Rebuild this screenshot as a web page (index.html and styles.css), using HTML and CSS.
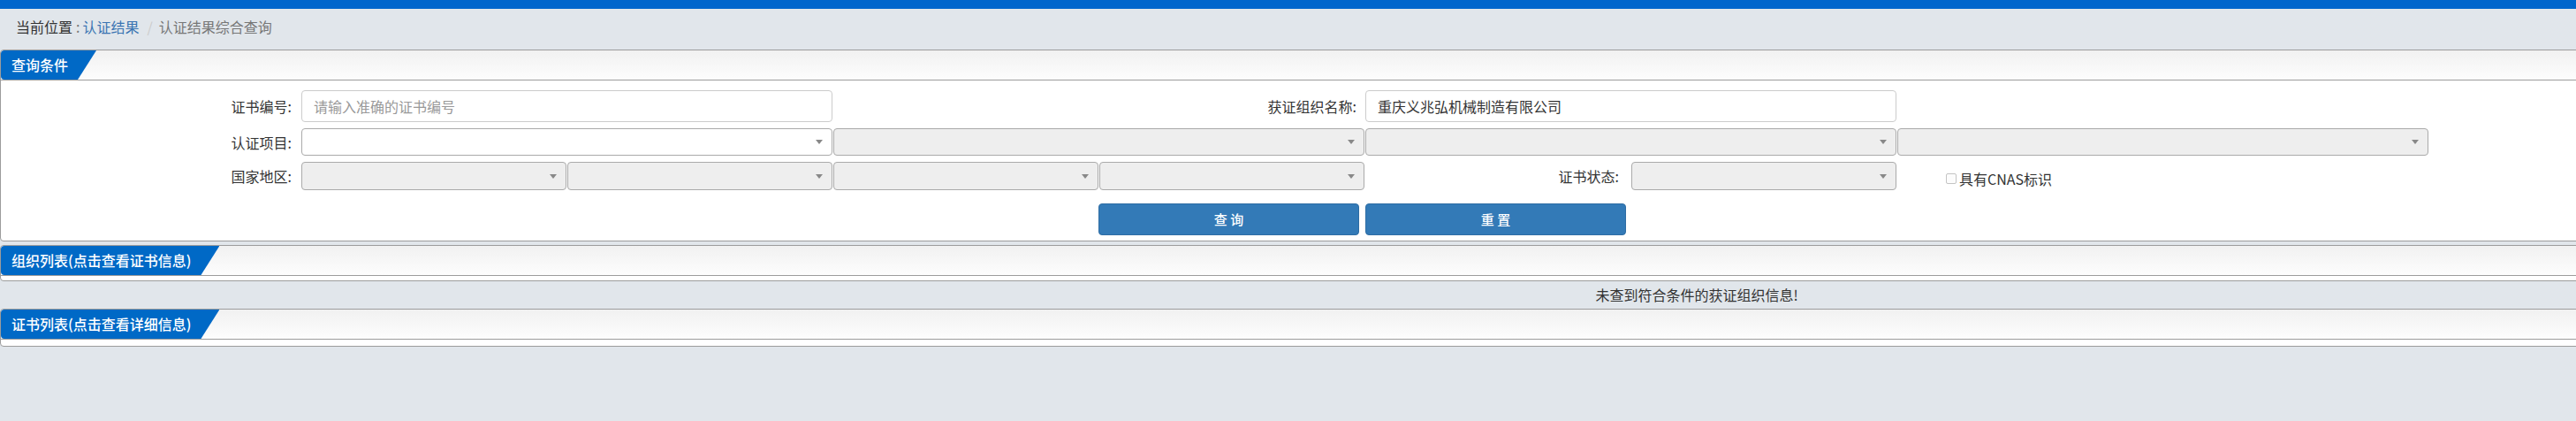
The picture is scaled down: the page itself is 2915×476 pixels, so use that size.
FILE: index.html
```html
<!doctype html>
<html>
  <head>
    <meta charset="utf-8">
    <title>认证结果综合查询</title>
    <link rel="stylesheet" href="styles.css">
  </head>
  <body>
    <div class="topbar"></div>
    <div class="crumbs">
      <span class="crumb-here">当前位置</span><span class="crumb-colon">:</span><a class="crumb-link">认证结果</a><span class="crumb-sep">/</span><span class="crumb-current">认证结果综合查询</span>
    </div>
    <div class="page">
      <div class="panel">
        <div class="panel-head"><span class="tab">查询条件</span></div>
        <div class="query-form">
          <!-- row 1 -->
          <label class="lbl r1">证书编号:</label>
          <input class="text-field r1 c2-4" type="text" placeholder="请输入准确的证书编号">
          <label class="lbl r1 c4-6">获证组织名称:</label>
          <input class="text-field r1 c6-8" type="text" value="重庆义兆弘机械制造有限公司">

          <!-- row 2 -->
          <label class="lbl r2">认证项目:</label>
          <div class="select r2 c2-4 enabled"></div>
          <div class="select r2 c4-6"></div>
          <div class="select r2 c6-8"></div>
          <div class="select r2 c8-10"></div>

          <!-- row 3 -->
          <label class="lbl r3">国家地区:</label>
          <div class="select r3 c2-3"></div>
          <div class="select r3 c3-4"></div>
          <div class="select r3 c4-5"></div>
          <div class="select r3 c5-6"></div>
          <label class="lbl lbl-status r3 c6-7">证书状态:</label>
          <div class="select r3 c7-8"></div>
          <div class="cnas r3 c8-9"><span class="checkbox"></span>具有CNAS标识</div>

          <!-- buttons -->
          <div class="btn r4 c5-6">查 询</div>
          <div class="btn r4 c6-7">重 置</div>
        </div>
      </div>

      <div class="panel panel-org">
        <div class="panel-head"><span class="tab">组织列表(点击查看证书信息)</span></div>
        <div class="panel-body"></div>
      </div>

      <div class="empty-msg">未查到符合条件的获证组织信息!</div>

      <div class="panel panel-cert">
        <div class="panel-head"><span class="tab">证书列表(点击查看详细信息)</span></div>
        <div class="panel-body"></div>
      </div>
    </div>
  </body>
</html>
```

FILE: styles.css
```css
html, body {
  margin: 0;
  padding: 0;
  overflow: hidden;
}
body {
  background-color: #e1e6eb;
  font-family: "Noto Sans CJK SC", "Noto Sans", sans-serif;
  font-size: 16px;
  color: #333;
}
.topbar {
  height: 10px;
  background-color: #0066cc;
}

/* breadcrumb */
.crumbs {
  height: 40px;
  line-height: 40px;
  padding: 0 0 6px 18px;
  white-space: nowrap;
}
.crumb-colon {
  color: #777;
  padding: 0 3px 0 4px;
}
.crumb-link {
  color: #3a74b2;
}
.crumb-sep {
  color: #ccc;
  padding: 0 7px 0 9px;
}
.crumb-current {
  color: #777;
}

/* panels */
.page {
  width: 3840px;
}
.panel {
  background-color: #fff;
  border: 1px solid #9c9c9c;
  border-radius: 4px;
  margin-bottom: 4px;
}
.panel-head {
  height: 33px;
  border-bottom: 1px solid #9c9c9c;
  background: linear-gradient(#f1f1f1, #fdfdfd);
  border-radius: 4px 4px 0 0;
}
.tab {
  display: inline-block;
  height: 33px;
  line-height: 33px;
  padding: 0 32px 0 12px;
  background-color: #0069c6;
  color: #fff;
  font-weight: 500;
  border-radius: 4px 0 0 4px;
  clip-path: polygon(0 0, 100% 0, calc(100% - 21px) 100%, 0 100%);
  white-space: nowrap;
}
.panel-org {
  margin-bottom: 0;
}
.panel-org .panel-body {
  height: 5px;
}
.panel-cert .panel-body {
  height: 7px;
}
.empty-msg {
  height: 31px;
  line-height: 31px;
  text-align: center;
}

/* query form */
.query-form {
  display: grid;
  grid-template-columns: 340px repeat(8, 301px);
  grid-template-rows: 36px 31px 32px 44px;
  row-gap: 7px;
  padding: 11px 0 6px;
}
.r1 { grid-row: 1; }
.r2 { grid-row: 2; }
.r3 { grid-row: 3; }
.r4 { grid-row: 4; }
.c2-3 { grid-column: 2 / 3; }
.c2-4 { grid-column: 2 / 4; }
.c3-4 { grid-column: 3 / 4; }
.c4-5 { grid-column: 4 / 5; }
.c4-6 { grid-column: 4 / 6; }
.c5-6 { grid-column: 5 / 6; }
.c6-7 { grid-column: 6 / 7; }
.c6-8 { grid-column: 6 / 8; }
.c7-8 { grid-column: 7 / 8; }
.c8-9 { grid-column: 8 / 9; }
.c8-10 { grid-column: 8 / 10; }

.lbl {
  display: flex;
  align-items: center;
  justify-content: flex-end;
  padding-right: 11px;
  white-space: nowrap;
}
.lbl.r1, .lbl.r2, .lbl.r3 {
  grid-column-start: 1;
}
.lbl.c4-6 {
  grid-column: 4 / 6;
  padding-right: 10px;
}
.lbl.lbl-status {
  grid-column: 6 / 7;
  padding-right: 14px;
}

.text-field {
  box-sizing: border-box;
  width: calc(100% - 1px);
  height: 36px;
  margin: 0;
  padding: 0 13px;
  border: 1px solid #ccc;
  border-radius: 4px;
  font-family: "Noto Sans CJK SC", "Noto Sans", sans-serif;
  font-size: 16px;
  color: #333;
  background-color: #fff;
  outline: none;
}
.text-field::placeholder {
  color: #999;
}

.select {
  box-sizing: border-box;
  width: calc(100% - 1px);
  border: 1px solid #aaa;
  border-radius: 4px;
  background-color: #eee;
  display: flex;
  align-items: center;
  justify-content: flex-end;
  padding-right: 10px;
}
.select::after {
  content: "";
  border-left: 4px solid transparent;
  border-right: 4px solid transparent;
  border-top: 5px solid #888;
}
.select.enabled {
  background-color: #fff;
}

.cnas {
  display: flex;
  align-items: center;
  padding: 6px 0 0 55px;
  white-space: nowrap;
}
.checkbox {
  box-sizing: border-box;
  width: 12px;
  height: 12px;
  margin-right: 3px;
  border: 1px solid #c4c4c4;
  border-radius: 2px;
  background-color: #fcfcfc;
}

.btn {
  align-self: end;
  box-sizing: border-box;
  width: calc(100% - 6px);
  height: 36px;
  line-height: 34px;
  border: 1px solid #2e6da4;
  border-radius: 4px;
  background-color: #337ab7;
  color: #fff;
  text-align: center;
  font-size: 15px;
  font-weight: 500;
}
.btn.c5-6 {
  margin-left: -1px;
}
```
